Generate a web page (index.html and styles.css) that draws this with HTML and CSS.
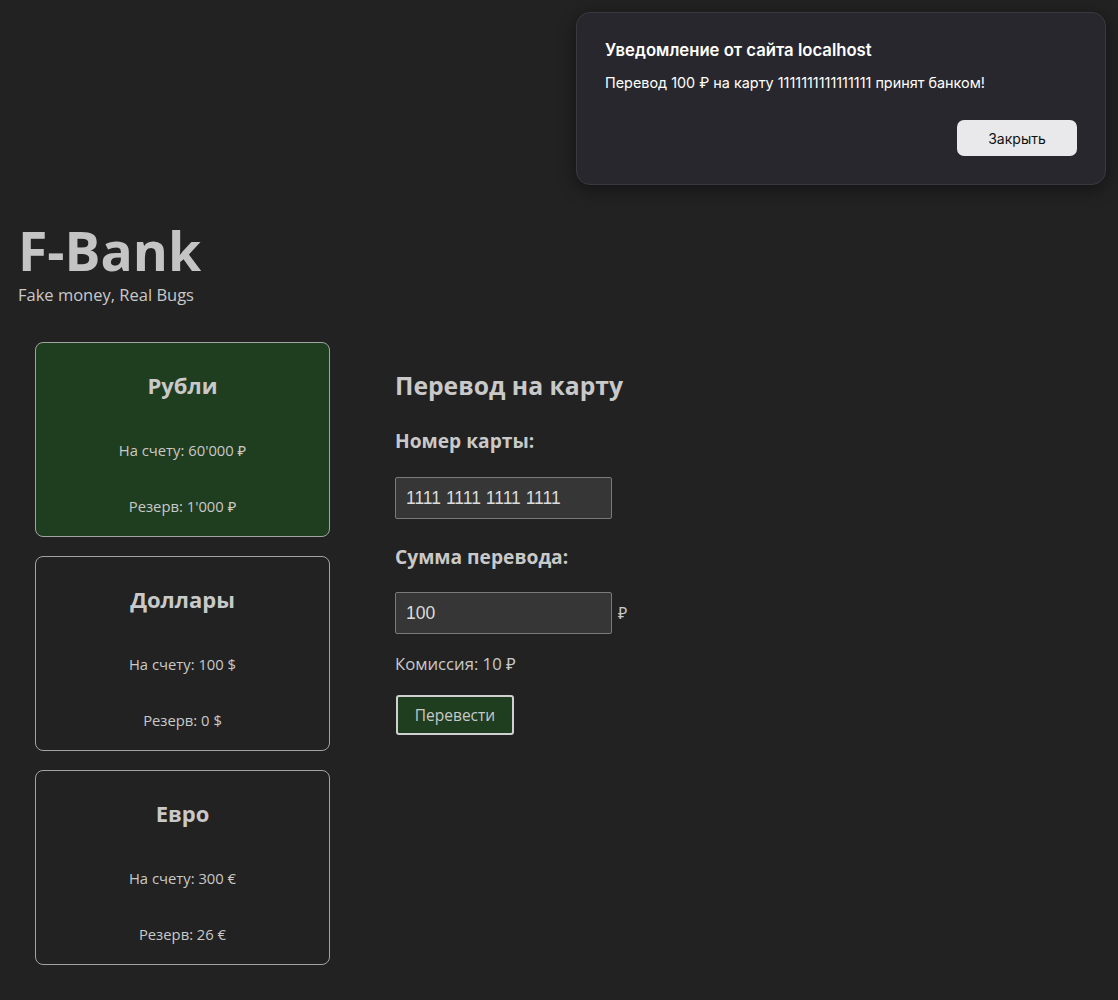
FILE: index.html
```html
<!DOCTYPE html>
<html lang="ru">
<head>
<meta charset="utf-8">
<title>F-Bank</title>
<link rel="stylesheet" href="styles.css">
</head>
<body>
<header class="header">
  <h1 class="logo">F-Bank</h1>
  <div class="tagline">Fake money, Real Bugs</div>
</header>
<main class="main">
  <section class="accounts">
    <div class="card card-active">
      <h2 class="card-title">Рубли</h2>
      <p class="card-line">На счету: 60'000 ₽</p>
      <p class="card-line card-line-2">Резерв: 1'000 ₽</p>
    </div>
    <div class="card">
      <h2 class="card-title">Доллары</h2>
      <p class="card-line">На счету: 100 $</p>
      <p class="card-line card-line-2">Резерв: 0 $</p>
    </div>
    <div class="card">
      <h2 class="card-title">Евро</h2>
      <p class="card-line">На счету: 300 €</p>
      <p class="card-line card-line-2">Резерв: 26 €</p>
    </div>
  </section>
  <section class="transfer">
    <h3 class="transfer-title">Перевод на карту</h3>
    <div class="field-label">Номер карты:</div>
    <div class="field-row"><input class="input" type="text" value="1111 1111 1111 1111"></div>
    <div class="field-label field-label-2">Сумма перевода:</div>
    <div class="field-row"><input class="input" type="text" value="100"><span class="currency">₽</span></div>
    <div class="commission">Комиссия: 10 ₽</div>
    <button class="btn">Перевести</button>
  </section>
</main>
<div class="dialog">
  <div class="dialog-title">Уведомление от сайта localhost</div>
  <div class="dialog-text">Перевод 100 ₽ на карту 1111111111111111 принят банком!</div>
  <div class="dialog-actions"><button class="dialog-btn">Закрыть</button></div>
</div>
</body>
</html>
```

FILE: styles.css
```css
html, body {
  margin: 0;
  padding: 0;
  background: #222222;
  color: #c9c9c9;
  font-family: "Open Sans", "Noto Sans", sans-serif;
}
body {
  min-height: 1000px;
}
.header {
  padding: 221px 0 0 18px;
}
.logo {
  margin: 0;
  font-size: 53.5px;
  line-height: 60px;
  font-weight: 700;
  letter-spacing: 0;
  color: #c4c4c4;
}
.tagline {
  font-size: 16.5px;
  line-height: 20px;
  margin-top: 4px;
  color: #c9c9c9;
}
.main {
  display: flex;
  padding: 37px 0 0 35px;
  gap: 65px;
}
.accounts {
  display: flex;
  flex-direction: column;
  gap: 19px;
  width: 295px;
}
.card {
  box-sizing: border-box;
  height: 195px;
  border: 1px solid #a3a3a3;
  border-radius: 8px;
  text-align: center;
  padding-top: 28px;
}
.card-active {
  background: #1f3d1f;
}
.card-title {
  margin: 0;
  font-size: 22px;
  line-height: 28px;
  font-weight: 700;
  color: #c9c9c9;
}
.card-line {
  margin: 41px 0 0;
  font-size: 14.8px;
  line-height: 20px;
}
.card-line-2 {
  margin-top: 36px;
}
.transfer {
  display: flex;
  flex-direction: column;
  align-items: flex-start;
  padding-top: 29px;
}
.transfer-title {
  margin: 0;
  font-size: 24.7px;
  line-height: 30px;
  font-weight: 700;
}
.field-label {
  margin-top: 28px;
  font-size: 19.2px;
  line-height: 24px;
  font-weight: 700;
}
.field-label-2 {
  margin-top: 26px;
}
.field-row {
  display: flex;
  align-items: center;
  margin-top: 24px;
}
.field-label-2 + .field-row {
  margin-top: 23px;
}
.input {
  box-sizing: border-box;
  width: 217px;
  height: 42px;
  background: #363636;
  border: 1px solid #7a7a7a;
  border-radius: 2px;
  color: #dcdcdc;
  font-family: "Liberation Sans", Arial, sans-serif;
  font-size: 17.5px;
  padding: 0 10px;
  margin: 0;
}
.currency {
  margin-left: 6px;
  font-size: 16px;
  color: #c9c9c9;
}
.commission {
  margin-top: 20px;
  font-size: 16.7px;
  line-height: 20px;
}
.btn {
  margin-top: 21px;
  margin-left: 1px;
  box-sizing: border-box;
  width: 118px;
  height: 40px;
  background: #1f3d1f;
  border: 2px solid #d0d0d0;
  border-radius: 3px;
  color: #c9c9c9;
  font-family: "Open Sans", "Noto Sans", sans-serif;
  font-size: 15.5px;
  padding: 0;
}
.dialog {
  position: absolute;
  top: 12px;
  left: 576px;
  width: 530px;
  height: 173px;
  box-sizing: border-box;
  background: #28272d;
  border: 1px solid #3a393f;
  border-radius: 14px;
  box-shadow: 0 4px 18px rgba(0,0,0,0.45);
  padding: 27px 28px 0 28px;
  font-family: Inter, Roboto, sans-serif;
  color: #ffffff;
}
.dialog-title {
  font-size: 16.7px;
  line-height: 20px;
  font-weight: 600;
}
.dialog-text {
  margin-top: 14px;
  font-size: 14.4px;
  line-height: 18px;
}
.dialog-actions {
  display: flex;
  justify-content: flex-end;
  margin-top: 28px;
}
.dialog-btn {
  width: 120px;
  height: 36px;
  background: #e9e9eb;
  border: none;
  border-radius: 7px;
  color: #111;
  font-family: Inter, Roboto, sans-serif;
  font-size: 14px;
}
```
